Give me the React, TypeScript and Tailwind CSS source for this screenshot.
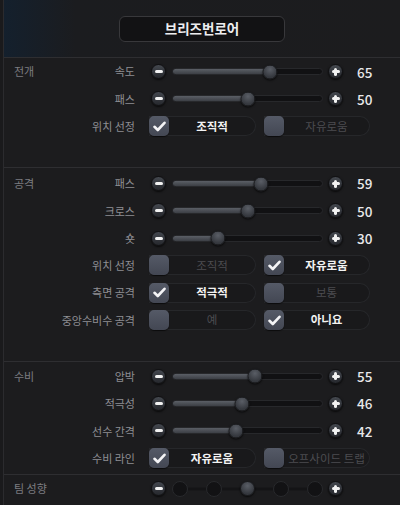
import type { ReactNode } from 'react';

type SliderRow = { kind: 'slider'; label: string; value: number };
type OptionRow = { kind: 'option'; label: string; options: [string, string]; selected: 0 | 1 };
type Row = SliderRow | OptionRow;

const sections: { title: string; rows: Row[] }[] = [
  {
    title: '전개',
    rows: [
      { kind: 'slider', label: '속도', value: 65 },
      { kind: 'slider', label: '패스', value: 50 },
      { kind: 'option', label: '위치 선정', options: ['조직적', '자유로움'], selected: 0 },
    ],
  },
  {
    title: '공격',
    rows: [
      { kind: 'slider', label: '패스', value: 59 },
      { kind: 'slider', label: '크로스', value: 50 },
      { kind: 'slider', label: '숏', value: 30 },
      { kind: 'option', label: '위치 선정', options: ['조직적', '자유로움'], selected: 1 },
      { kind: 'option', label: '측면 공격', options: ['적극적', '보통'], selected: 0 },
      { kind: 'option', label: '중앙수비수 공격', options: ['예', '아니요'], selected: 1 },
    ],
  },
  {
    title: '수비',
    rows: [
      { kind: 'slider', label: '압박', value: 55 },
      { kind: 'slider', label: '적극성', value: 46 },
      { kind: 'slider', label: '선수 간격', value: 42 },
      { kind: 'option', label: '수비 라인', options: ['자유로움', '오프사이드 트랩'], selected: 0 },
    ],
  },
];

function RoundButton({ plus }: { plus?: boolean }) {
  return (
    <div className="relative flex h-[15px] w-[15px] shrink-0 items-center justify-center rounded-full border border-[#101012] bg-gradient-to-b from-[#44484f] to-[#26282d] shadow-[0_1px_2px_rgba(0,0,0,0.7)]">
      <div className="h-[3px] w-[8px] rounded-sm bg-[#f2f2f2]" />
      {plus ? <div className="absolute h-[8px] w-[3px] rounded-sm bg-[#f2f2f2]" /> : null}
    </div>
  );
}

function Knob() {
  return (
    <div className="h-[15px] w-[15px] rounded-full border border-[#1a1b1e] bg-[radial-gradient(circle_at_50%_30%,#5a5e66,#34373d_70%)] shadow-[0_1px_2px_rgba(0,0,0,0.7)]" />
  );
}

function Slider({ value }: { value: number }) {
  return (
    <div className="flex items-center">
      <div className="ml-[15px]">
        <RoundButton />
      </div>
      <div className="relative ml-[6px] h-[7px] w-[151px] rounded-full border border-[#27282b] bg-[#111113]">
        <div
          className="absolute left-0 top-0 h-full rounded-full bg-gradient-to-b from-[#5b5f66] to-[#3c3f45]"
          style={{ width: `${value}%` }}
        />
        <div className="absolute top-1/2 -translate-x-1/2 -translate-y-1/2" style={{ left: `${value}%` }}>
          <Knob />
        </div>
      </div>
      <div className="ml-[5px]">
        <RoundButton plus />
      </div>
      <div className="ml-[14px] text-[13.5px] font-medium text-[#e8e8ea]">{value}</div>
    </div>
  );
}

function Check() {
  return (
    <svg width="13" height="11" viewBox="0 0 13 11" fill="none">
      <path d="M1.5 5.8 L4.8 9 L11.5 1.8" stroke="#f4f4f6" strokeWidth="2.6" strokeLinecap="round" strokeLinejoin="round" />
    </svg>
  );
}

function Pill({ text, on, width }: { text: string; on: boolean; width: string }) {
  return (
    <div className={`flex h-[20px] items-center rounded-r-full rounded-l-[5px] border border-[#26272a] bg-[#19191b] ${width}`}>
      <div className="-ml-px flex h-[20px] w-[20px] shrink-0 items-center justify-center rounded-[5px] bg-gradient-to-b from-[#555a67] to-[#434753] shadow-[0_1px_1px_rgba(0,0,0,0.6)]">
        {on ? <Check /> : null}
      </div>
      <div className={`flex-1 whitespace-nowrap text-center text-[11.5px] ${on ? 'font-bold text-[#f2f2f2]' : 'text-[#4c4c50]'}`}>
        {text}
      </div>
    </div>
  );
}

function Options({ row }: { row: OptionRow }) {
  return (
    <div className="ml-[13px] flex items-center gap-[8px]">
      <Pill text={row.options[0]} on={row.selected === 0} width="w-[107px]" />
      <Pill text={row.options[1]} on={row.selected === 1} width="w-[106px]" />
    </div>
  );
}

function RowShell({ section, label, children }: { section?: string; label?: string; children: ReactNode }) {
  return (
    <div className="flex h-[27.3px] items-center">
      <div className="flex w-[132px] shrink-0 items-center">
        <div className="w-[40px] shrink-0 whitespace-nowrap pl-[10px] text-[11px] text-[#7c7c81]">{section}</div>
        <div className="flex-1 whitespace-nowrap pr-[1px] text-right text-[11px] text-[#8e8e93]">{label}</div>
      </div>
      {children}
    </div>
  );
}

function TeamTendency() {
  const stops = [0, 1, 2, 3, 4];
  return (
    <div className="flex items-center">
      <div className="ml-[15px]">
        <RoundButton />
      </div>
      <div className="relative ml-[6px] flex h-[16px] w-[151px] items-center justify-between">
        <div className="absolute left-[8px] right-[8px] top-1/2 h-[3px] -translate-y-1/2 bg-[#141416]" />
        {stops.map((s) =>
          s === 2 ? (
            <div key={s} className="relative">
              <Knob />
            </div>
          ) : (
            <div key={s} className="relative h-[16px] w-[16px] rounded-full border border-[#28292c] bg-[#121214]" />
          ),
        )}
      </div>
      <div className="ml-[5px]">
        <RoundButton plus />
      </div>
    </div>
  );
}

export default function App() {
  return (
    <div
      className="h-[505px] w-[400px] overflow-hidden bg-[#1a1a1c] pl-[3px]"
      style={{ fontFamily: '"Noto Sans CJK KR", "Noto Sans", sans-serif' }}
    >
      <div className="h-full border-l border-[#2b2b2e] bg-[#1c1c1e]">
        <div className="flex h-[57px] items-center justify-center bg-[linear-gradient(to_right,#14202d,#1b1c1f_18%,#1c1c1e)]">
          <div className="flex h-[26px] w-[166px] items-center justify-center rounded-md border border-[#38383b] bg-[#121214] text-[13.5px] font-semibold text-[#ededef]">
            브리즈번로어
          </div>
        </div>
        {sections.map((sec, si) => (
          <div key={sec.title} className={`border-t border-[#2e2e31] ${si === 0 ? 'pt-0' : si === 1 ? 'pt-[2px]' : 'pt-px'}`}>
            {sec.rows.map((row, ri) => (
              <RowShell key={ri} section={ri === 0 ? sec.title : undefined} label={row.label}>
                {row.kind === 'slider' ? <Slider value={row.value} /> : <Options row={row} />}
              </RowShell>
            ))}
            {si < 2 ? <div className="h-[27px]" /> : <div className="h-[2px]" />}
          </div>
        ))}
        <div className="border-t border-[#2e2e31]">
          <RowShell section="팀 성향">
            <TeamTendency />
          </RowShell>
        </div>
      </div>
    </div>
  );
}
